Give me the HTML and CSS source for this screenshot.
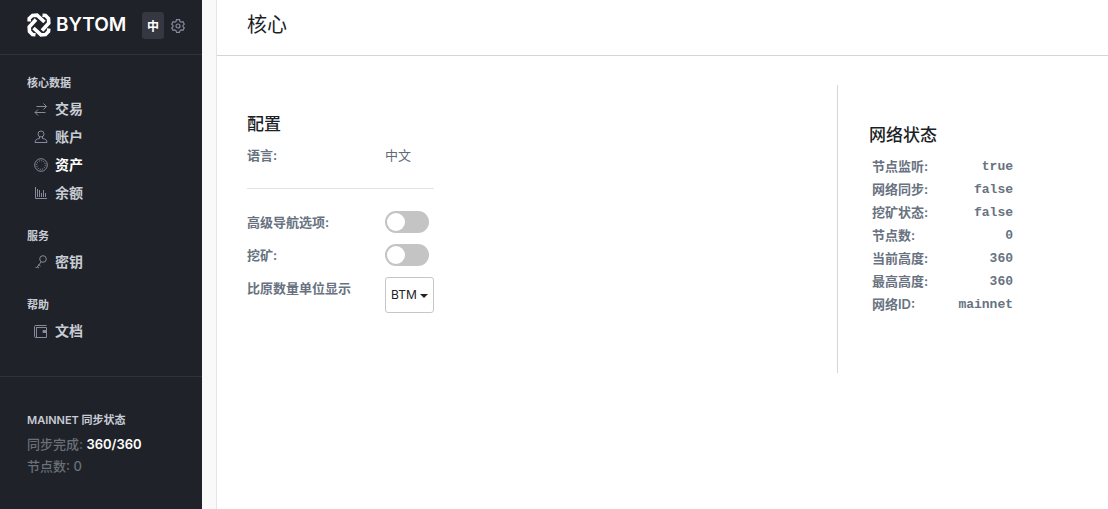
FILE: index.html
```html
<!DOCTYPE html>
<html lang="zh-CN">
<head>
<meta charset="UTF-8">
<meta name="viewport" content="initial-scale=1, width=device-width">
<title>Bytom - 核心</title>
<link rel="stylesheet" href="styles.css">
</head>
<body>
<div class="app">
	<aside class="sidebar">
		<header class="brand">
			<a class="logo" href="#home">
				<svg width="24" height="24" viewBox="0 0 24 24" fill="none" stroke="#fff" stroke-width="3.600">
					<path d="M2.200 8.500V5.500L5.500 2.500L10 2.200L17.500 9"/>
					<path d="M15.500 2.200L18.500 2.500L21.500 5.500L21.800 10L15 17.500"/>
					<path d="M21.800 15.500L21.500 18.500L18.500 21.500L14 21.800L6.500 15"/>
					<path d="M8.500 21.800L5.500 21.500L2.500 18.500L2.200 14L9 6.500"/>
				</svg>
				<span>BYTOM</span>
			</a>
			<button class="lang" type="button">中</button>
			<a class="settings" href="#core" aria-label="设置">
				<svg width="14" height="14" viewBox="0 0 14 14" fill="none" stroke="#858b9a" stroke-width="1.200">
					<path d="M5.500 .700h3l.500 1.800 1.200.700 1.800-.500 1.300 2.500-1.300 1.200v1.300l1.300 1.200-1.300 2.500-1.800-.500-1.200.700-.500 1.700h-3l-.500-1.700-1.200-.700-1.800.500L.700 8.900 2 7.700V6.400L.700 5.200 2 2.700l1.800.500L5 2.500z"/>
					<circle cx="7" cy="7" r="2"/>
				</svg>
			</a>
		</header>
		<nav>
			<h2>核心数据</h2>
			<ul>
				<li><a href="#transactions"><svg viewBox="0 0 14 14"><path d="M2.500 4.500H12.500M9.500 1.500l3 3-3 3M11.500 10.500H1M4 7.500l-3 3 3 3"/></svg>交易</a></li>
				<li><a href="#accounts"><svg viewBox="0 0 14 14"><circle cx="7" cy="4" r="3"/><path d="M5.500 7v1.500Q1 9 1 12.500H13Q13 9 8.500 8.500V7"/></svg>账户</a></li>
				<li><a class="active" href="#assets"><svg viewBox="0 0 14 14"><circle cx="7" cy="7" r="6.300"/><circle cx="7" cy="7" r="4.300" stroke-dasharray="1.200 1"/></svg>资产</a></li>
				<li><a href="#balances"><svg viewBox="0 0 14 14"><path d="M1.500 1V12.500H13M3.500 3v8M5.500 4v7M7.500 7v4M9.500 4v7M11.500 7v4"/></svg>余额</a></li>
			</ul>
			<h2>服务</h2>
			<ul>
				<li><a href="#keys"><svg viewBox="0 0 14 14"><circle cx="9" cy="4" r="3.300"/><path d="M7.200 6.800L2.500 13M4.500 9.500l2 1.500M3 11.500l2 1.500M1.500 12l1 1"/></svg>密钥</a></li>
			</ul>
			<h2>帮助</h2>
			<ul>
				<li><a href="#docs"><svg viewBox="0 0 14 14"><path d="M12.500 1.500H2Q.500 1.500 .500 2.500V12.500Q.500 13.500 2 13.500H12.500V3.500H2M2.500 3.500V13"/><path d="M9 6.500h3.500v2H9z" fill="#858b9a"/></svg>文档</a></li>
			</ul>
		</nav>
		<section class="sync">
			<h2>MAINNET 同步状态</h2>
			<p>同步完成: <b>360/360</b></p>
			<p>节点数: 0</p>
		</section>
	</aside>

	<main>
		<header class="title"><h1>核心</h1></header>
		<div class="content">
			<section class="config">
				<h2>配置</h2>
				<div class="row"><span class="label">语言:</span><span>中文</span></div>
				<hr>
				<div class="row">
					<label for="id_advanced">高级导航选项:</label>
					<input class="toggle" type="checkbox" id="id_advanced">
				</div>
				<div class="row">
					<label for="id_mining">挖矿:</label>
					<input class="toggle" type="checkbox" id="id_mining">
				</div>
				<div class="row">
					<label for="id_unit">比原数量单位显示</label>
					<div class="dropdown">
						<select id="id_unit">
							<option>BTM</option>
							<option>mBTM</option>
							<option>NEU</option>
						</select>
					</div>
				</div>
			</section>
			<section class="network">
				<h2>网络状态</h2>
				<table>
					<tr><th scope="row">节点监听:</th><td>true</td></tr>
					<tr><th scope="row">网络同步:</th><td>false</td></tr>
					<tr><th scope="row">挖矿状态:</th><td>false</td></tr>
					<tr><th scope="row">节点数:</th><td>0</td></tr>
					<tr><th scope="row">当前高度:</th><td>360</td></tr>
					<tr><th scope="row">最高高度:</th><td>360</td></tr>
					<tr><th scope="row">网络ID:</th><td>mainnet</td></tr>
				</table>
			</section>
		</div>
	</main>
</div>
</body>
</html>
```
FILE: styles.css
```css
* {box-sizing:border-box;}
body {margin:0; background:#f9f9f9; color:#5f6a78; font:13px/22px Inter, "Noto Sans CJK SC", sans-serif;}
h1, h2, p, ul {margin:0; padding:0; font-weight:500;}
ul {list-style:none;}
a {color:inherit; text-decoration:none;}

.app {display:flex; min-height:100vh;}

.sidebar {flex:none; width:202px; background:#1f2229; color:#c8ccd4;}
.brand {display:flex; align-items:center; height:55px; padding:0 16px 4px 27px; border-bottom:1px solid #303236;}
.logo {display:flex; align-items:center; gap:5px; width:115px; color:#fff; font-size:19px; font-weight:600;}
.logo svg {flex:none;}
.lang {width:22px; height:27px; padding:0; border:0; border-radius:3px; background:#353840; color:#fff; font:bold 12px "Noto Sans CJK SC", sans-serif;}
.settings {display:flex; margin-left:7px; padding-top:2px;}
.sidebar nav {padding:16px 0 31px 27px;}
.sidebar h2 {font-size:11px; font-weight:600; line-height:24px;}
.sidebar ul + h2 {margin-top:17px;}
nav a {display:flex; align-items:center; gap:7px; height:28px; padding-left:7px; font-size:14px; font-weight:600;}
nav a.active {color:#fff;}
nav svg {width:14px; height:14px; fill:none; stroke:#858b9a; stroke-width:1;}
.sync {padding:32px 27px; border-top:1px solid #303236; color:#6a7078;}
.sidebar .sync h2 {margin-bottom:2px; color:#c8ccd4; line-height:22px;}
.sync b {color:#fff; font-weight:600;}

main {flex:1; margin-left:14px; border-left:1px solid #e3e4e6; background:#fff;}
.title {height:56px; padding:9px 30px; border-bottom:1px solid #d3d5d7;}
.title h1 {color:#1c1f27; font-size:20px; font-weight:400; line-height:32px;}
.content {display:flex; justify-content:space-between; padding:29px 30px;}
.content h2 {color:#1c1f27; font-size:17px; line-height:24px;}

.config {padding-top:27px;}
.config h2 {margin-bottom:3px;}
.row {display:grid; grid-template-columns:138px auto; justify-content:start; padding:5px 0 6px;}
.label, label, th {color:#687280; font-weight:600;}
hr {width:187px; height:1px; margin:16px 0 17px; border:0; background:#e3e4e6;}
.toggle {appearance:none; width:44px; height:22px; margin:0; padding:2px; border-radius:11px; background:#c4c4c4; cursor:pointer;}
.toggle::before {content:""; display:block; width:18px; height:18px; border-radius:50%; background:#fff;}
.toggle:checked {background:#1c1f27;}
.toggle:checked::before {margin-left:auto;}
.dropdown {position:relative; width:49px;}
.dropdown::after {content:""; position:absolute; right:6px; top:17px; border:4px solid transparent; border-top-color:#222; border-bottom:0; pointer-events:none;}
select {appearance:none; display:block; width:100%; height:36px; padding:0 0 2px 5px; border:1px solid #c4c6c9; border-radius:3px; background:#fff; color:#222; font:12px Inter, sans-serif;}

.network {width:29%; padding:38px 0 58px 31px; border-left:1px solid #d3d5d7;}
.network h2 {margin-bottom:7px;}
table {width:147px; border-collapse:collapse;}
th, td {height:23px; padding:0 3px; white-space:nowrap;}
th {text-align:left;}
td {padding-top:3px; color:#687280; font:bold 13px/20px "Liberation Mono", monospace; text-align:right;}
```
